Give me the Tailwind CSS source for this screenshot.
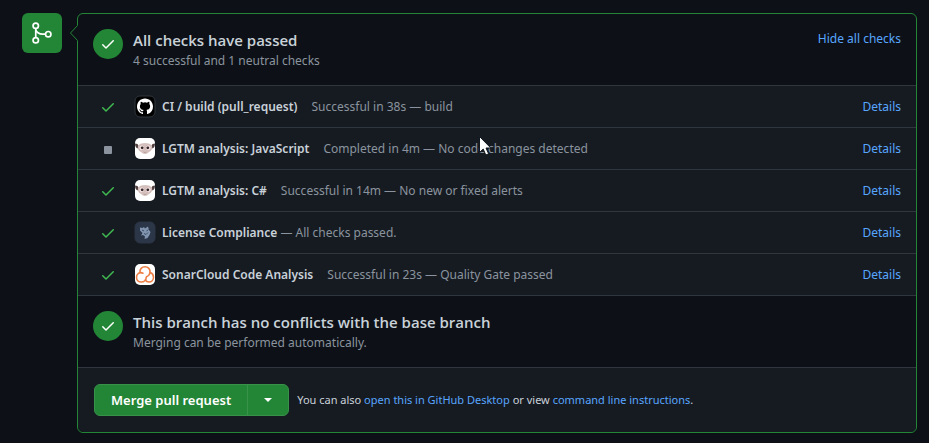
<!DOCTYPE html>
<html lang="en">
<head>
<meta charset="utf-8">
<meta name="viewport" content="width=device-width, initial-scale=1">
<title>Merge pull request</title>
<script src="https://cdn.jsdelivr.net/npm/@tailwindcss/browser@4"></script>
</head>
<body class="min-h-screen bg-[#0d1117] font-['Noto_Sans','Open_Sans',sans-serif] text-xs leading-5 text-[#c9d1d9]">
<svg class="hidden" aria-hidden="true">
  <symbol id="check" viewBox="0 0 16 16"><path fill="currentColor" d="M13.78 4.22a.75.75 0 0 1 0 1.06l-7.25 7.25a.75.75 0 0 1-1.06 0L2.22 9.28a.75.75 0 0 1 1.06-1.06L6 10.94l6.72-6.72a.75.75 0 0 1 1.06 0z"/></symbol>
  <symbol id="lgtm" viewBox="0 0 20 21">
    <rect width="20" height="21" rx="5" fill="#fff"/>
    <path d="M0 5.500 2.500 6 4 8.500 2.500 10.500Q0 9.500 0 5.500zM20 5.500 17.500 6 16 8.500 17.500 10.500Q20 9.500 20 5.500z" fill="#51403f"/>
    <path d="M3 8Q4.500 5 10 5t7 3Q18 12 14 14 12.500 16 10 16T6 14Q2 12 3 8z" fill="#d6c3c0"/>
    <circle cx="6.800" cy="9.800" r="2.900" fill="#f2e3e2" stroke="#c4a8a5" stroke-width=".6"/><circle cx="13.200" cy="9.800" r="2.900" fill="#f2e3e2" stroke="#c4a8a5" stroke-width=".6"/>
    <circle cx="7.200" cy="9.800" r="1.400" fill="#352629"/><circle cx="12.800" cy="9.800" r="1.400" fill="#352629"/>
    <path d="M8.500 14Q10 15 11.500 14" fill="none" stroke="#a88d89" stroke-width=".7"/>
  </symbol>
</svg>
<main class="flex items-start gap-[15px] pt-[13px] pr-3 pb-[10px] pl-[22px]">
  <div class="flex size-10 shrink-0 items-center justify-center rounded-md bg-[#238636] text-white">
    <svg class="size-6" viewBox="0 0 24 24" fill="none" stroke="currentColor" stroke-width="1.700" aria-hidden="true"><circle cx="5.750" cy="4.750" r="2.700"/><circle cx="5.750" cy="19.250" r="2.700"/><circle cx="18.250" cy="13.200" r="2.700"/><path d="M5.750 7.250v9.500M5.750 8c0 3 3.500 5.200 7 5.200h3"/></svg>
  </div>
  <section class="relative min-w-0 grow rounded-md border border-[#238636]">
    <svg class="absolute -left-2 top-[11px] h-4 w-2" viewBox="0 0 8 16" aria-hidden="true"><path d="M8 0 0 8l8 8z" fill="#0d1117"/><path d="M7.500.5 0.500 8l7 7.500" fill="none" stroke="#238636"/></svg>
    <header class="flex items-start px-[15px] pt-[15px] pb-[14px]">
      <span class="mr-[10px] flex size-[30px] shrink-0 items-center justify-center rounded-full bg-[#238636] text-white"><svg class="size-4" aria-hidden="true"><use href="#check"/></svg></span>
      <div class="grow">
        <h2 class="font-['Open_Sans',sans-serif] text-[15px] leading-[22px] font-semibold">All checks have passed</h2>
        <p class="text-[#8b949e]">4 successful and 1 neutral checks</p>
      </div>
      <button type="button" class="text-[#58a6ff]">Hide all checks</button>
    </header>
    <ul class="bg-[#161b22]">
      <li class="flex items-center border-t border-[#30363d] py-[10px] pr-[15px] pl-[22px]">
        <svg class="mr-[19px] size-4 shrink-0 text-[#3fb950]" role="img" aria-label="Successful"><use href="#check"/></svg>
        <svg class="mr-[7px] h-[21px] w-5 shrink-0 overflow-visible" viewBox="0 0 20 21" aria-hidden="true"><rect width="20" height="21" rx="5" fill="#000" stroke="#30363d"/><path transform="translate(2 2.500)" fill="#fff" d="M8 0C3.580 0 0 3.580 0 8c0 3.540 2.290 6.530 5.470 7.590.4.070.55-.17.55-.38 0-.19-.01-.82-.01-1.490-2.010.37-2.530-.49-2.690-.94-.09-.23-.48-.94-.82-1.130-.28-.15-.68-.52-.01-.53.63-.01 1.080.58 1.230.82.72 1.210 1.870.87 2.330.66.070-.52.28-.87.51-1.070-1.780-.2-3.640-.89-3.640-3.950 0-.87.31-1.590.82-2.150-.08-.2-.36-1.020.08-2.120 0 0 .67-.21 2.200.82a7.600 7.600 0 0 1 4 0c1.530-1.040 2.200-.82 2.200-.82.44 1.100.16 1.920.08 2.120.51.56.82 1.270.82 2.150 0 3.070-1.870 3.750-3.650 3.950.29.25.54.73.54 1.480 0 1.070-.01 1.930-.01 2.200 0 .21.15.46.55.38A8.010 8.010 0 0 0 16 8c0-4.420-3.580-8-8-8z"/></svg>
        <p class="grow text-[#8b949e]"><strong class="mr-[14px] font-semibold text-[#c9d1d9]">CI / build (pull_request)</strong>Successful in 38s — build</p>
        <a href="#" class="text-[#58a6ff]">Details</a>
      </li>
      <li class="flex items-center border-t border-[#30363d] py-[10px] pr-[15px] pl-[22px]">
        <svg class="mr-[19px] size-4 shrink-0" viewBox="0 0 16 16" role="img" aria-label="Neutral"><rect x="4" y="5" width="8" height="8" rx="1" fill="#8b949e"/></svg>
        <svg class="mr-[7px] h-[21px] w-5 shrink-0" aria-hidden="true"><use href="#lgtm"/></svg>
        <p class="grow text-[#8b949e]"><strong class="mr-[14px] font-semibold text-[#c9d1d9]">LGTM analysis: JavaScript</strong>Completed in 4m — No code changes detected</p>
        <a href="#" class="text-[#58a6ff]">Details</a>
      </li>
      <li class="flex items-center border-t border-[#30363d] py-[10px] pr-[15px] pl-[22px]">
        <svg class="mr-[19px] size-4 shrink-0 text-[#3fb950]" role="img" aria-label="Successful"><use href="#check"/></svg>
        <svg class="mr-[7px] h-[21px] w-5 shrink-0" aria-hidden="true"><use href="#lgtm"/></svg>
        <p class="grow text-[#8b949e]"><strong class="mr-[14px] font-semibold text-[#c9d1d9]">LGTM analysis: C#</strong>Successful in 14m — No new or fixed alerts</p>
        <a href="#" class="text-[#58a6ff]">Details</a>
      </li>
      <li class="flex items-center border-t border-[#30363d] py-[10px] pr-[15px] pl-[22px]">
        <svg class="mr-[19px] size-4 shrink-0 text-[#3fb950]" role="img" aria-label="Successful"><use href="#check"/></svg>
        <svg class="mr-[7px] h-[21px] w-5 shrink-0 overflow-visible" viewBox="0 0 20 21" aria-hidden="true"><rect width="20" height="21" rx="5" fill="#2b3648" stroke="#2b3442"/><path fill="#8295b0" d="M5 5.500 7.500 6 9 5l1 1.500L13 4.500l1 3.500 1.500 2-1 3-2 3L9.500 17l.5-2.500-2-1.500-2 .5L7.500 11 5 8.500z"/><path d="m7 8 2 1m2.500 0 2-1.500M9 11.500l2 1 2-2" fill="none" stroke="#35445b" stroke-width=".9"/></svg>
        <p class="grow text-[#8b949e]"><strong class="font-semibold text-[#c9d1d9]">License Compliance</strong> — All checks passed.</p>
        <a href="#" class="text-[#58a6ff]">Details</a>
      </li>
      <li class="flex items-center border-t border-[#30363d] py-[10px] pr-[15px] pl-[22px]">
        <svg class="mr-[19px] size-4 shrink-0 text-[#3fb950]" role="img" aria-label="Successful"><use href="#check"/></svg>
        <svg class="mr-[7px] h-[21px] w-5 shrink-0" viewBox="0 0 20 21" aria-hidden="true"><rect width="20" height="21" rx="5" fill="#fff"/><g fill="none" stroke="#ed7d43" stroke-width="1.600" stroke-linecap="round"><path d="M5 8.500C4.500 5 7 2.800 10 2.800s5.500 2.400 5 5.700c-.3 2.200-1.500 3.500-3.500 4.200"/><path d="M8 9.200C4.500 7.500 1.500 10 1.500 13.200s2.500 4.800 4.700 4.800c3 0 5-2 5-4.500"/><path d="M15.200 8.600c2 .7 3.300 2.400 3.300 4.600 0 2.800-2 4.800-4.500 4.800-1.600 0-2.900-.7-3.800-1.900"/></g></svg>
        <p class="grow text-[#8b949e]"><strong class="mr-[14px] font-semibold text-[#c9d1d9]">SonarCloud Code Analysis</strong>Successful in 23s — Quality Gate passed</p>
        <a href="#" class="text-[#58a6ff]">Details</a>
      </li>
    </ul>
    <div class="flex items-start border-t border-[#30363d] px-[15px] pt-[15px] pb-[14px]">
      <span class="mr-[10px] flex size-[30px] shrink-0 items-center justify-center rounded-full bg-[#238636] text-white"><svg class="size-4" aria-hidden="true"><use href="#check"/></svg></span>
      <div>
        <h2 class="font-['Open_Sans',sans-serif] text-[15px] leading-[22px] font-semibold">This branch has no conflicts with the base branch</h2>
        <p class="text-[#8b949e]">Merging can be performed automatically.</p>
      </div>
    </div>
    <footer class="flex items-center gap-2 rounded-b-md border-t border-[#30363d] bg-[#161b22] px-4 py-4">
      <div class="flex h-8 shrink-0 overflow-hidden rounded-md border border-[#38924a] bg-[#238636] text-white">
        <button type="button" class="px-4 text-[13px] font-semibold">Merge pull request</button>
        <button type="button" class="flex w-[41px] items-center justify-center border-l border-[#38924a]" aria-label="Select merge method"><svg class="h-1 w-2" viewBox="0 0 8 4" fill="currentColor" aria-hidden="true"><path d="M0 0h8L4 4z"/></svg></button>
      </div>
      <p class="text-[11px]">You can also <a href="#" class="text-[#58a6ff]">open this in GitHub Desktop</a> or view <a href="#" class="text-[#58a6ff]">command line instructions</a>.</p>
    </footer>
  </section>
</main>
<svg class="pointer-events-none absolute top-[136px] left-[479px] h-5 w-3" viewBox="0 0 12 20" aria-hidden="true"><path d="M.5.5v16l3.700-3.500 2.600 6 2.800-1.200L7 12h4.800z" fill="#fff" stroke="#111820"/></svg>
</body>
</html>
